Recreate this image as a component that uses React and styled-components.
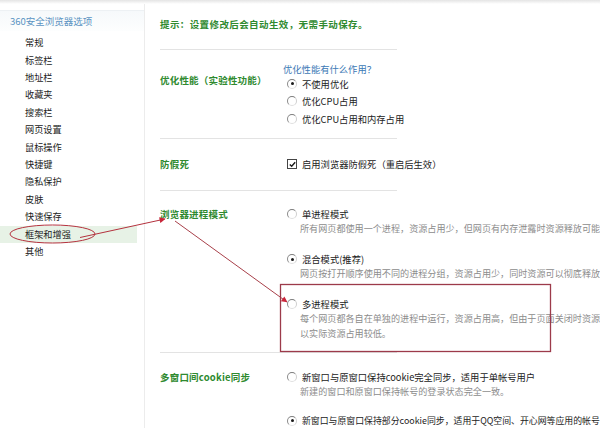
import React from 'react';
import styled, { createGlobalStyle } from 'styled-components';

const GlobalStyle = createGlobalStyle`
  html, body {
    margin: 0;
    padding: 0;
    background: #fff;
  }
  body {
    font-family: 'Noto Sans CJK SC', 'Noto Sans', sans-serif;
    color: #222;
  }
`;

const Page = styled.div`
  position: relative;
  width: 600px;
  height: 428px;
  overflow: hidden;
  background: #fff;
`;

const TopShade = styled.div`
  height: 4px;
  background: linear-gradient(#e4e4e4, #fff);
`;

const Body = styled.div`
  display: flex;
  height: 424px;
`;

const Sidebar = styled.aside`
  box-sizing: border-box;
  width: 145px;
  flex: none;
  padding-top: 6px;
  border-right: 1px solid #ececec;
`;

const SideHeader = styled.div`
  height: 20px;
  line-height: 20px;
  padding-left: 10px;
  font-size: 9.5px;
  color: #5a93c2;
  border-top: 1px solid #edf1f4;
  background: linear-gradient(#f6f9fb, #fdfefe);
`;

const Menu = styled.ul`
  list-style: none;
  margin: 3.3px 0 0;
  padding: 0;
`;

const MenuItem = styled.li`
  width: 137px;
  height: 17.4px;
  line-height: 17.4px;
  padding-left: 25px;
  box-sizing: border-box;
  font-size: 9.2px;
  color: #222;
  background: ${p => (p.$active ? '#e7f2e6' : 'transparent')};
`;

const Main = styled.main`
  flex: 1;
  padding-left: 15px;
  overflow: hidden;
  white-space: nowrap;
`;

const Tip = styled.div`
  padding-top: 11.5px;
  line-height: 17px;
  font-size: 9.5px;
  font-weight: 700;
  letter-spacing: 0.4px;
  color: #2f8a2f;
`;

const Separator = styled.div`
  width: 237px;
  height: 1px;
  background: #e3e3e3;
  margin-top: ${p => p.$top || 0}px;
`;

const Section = styled.section`
  display: grid;
  grid-template-columns: 123px 1fr;
  align-items: start;
  padding: ${p => p.$pt}px 0 ${p => p.$pb}px;
`;

const Label = styled.div`
  margin-top: ${p => p.$offset || 0}px;
  line-height: ${p => p.$lh || 17}px;
  font-size: 9.5px;
  font-weight: 700;
  letter-spacing: 0.2px;
  color: #2f8a2f;
`;

const Controls = styled.div`
  display: flex;
  flex-direction: column;
  gap: ${p => p.$gap || 0}px;
`;

const HelpLink = styled.a`
  line-height: 12px;
  font-size: 9.3px;
  color: #3b78b5;
  text-decoration: none;
`;

const Choice = styled.div`
  display: flex;
  align-items: center;
  gap: 5px;
  padding-left: 4px;
  height: ${p => p.$h || 17.5}px;
  font-size: ${p => p.$size || 9.3}px;
  color: #222;
`;

const Radio = styled.span`
  position: relative;
  width: 8px;
  height: 8px;
  flex: none;
  border-radius: 50%;
  border: 1px solid;
  border-color: #7d7d7d #cfcfcf #e0e0e0 #8a8a8a;
  background: #fff;

  &::after {
    content: '';
    display: ${p => (p.$checked ? 'block' : 'none')};
    position: absolute;
    left: 2.5px;
    top: 2.5px;
    width: 3px;
    height: 3px;
    border-radius: 50%;
    background: #1a1a1a;
  }
`;

const Box = styled.span`
  width: 8px;
  height: 8px;
  flex: none;
  border: 1px solid #444;
  background: #fff;
  display: flex;
  align-items: center;
  justify-content: center;
`;

const Desc = styled.div`
  padding-left: 17px;
  line-height: 14.5px;
  font-size: 9.1px;
  color: #8c8c8c;
`;

const Option = styled.div``;

const Overlay = styled.svg`
  position: absolute;
  left: 0;
  top: 0;
  pointer-events: none;
`;

const menu = [
  '常规', '标签栏', '地址栏', '收藏夹', '搜索栏', '网页设置', '鼠标操作',
  '快捷键', '隐私保护', '皮肤', '快速保存', '框架和增强', '其他',
];

const RadioOption = ({ checked, title, lines, size, h = 14.5 }) => (
  <Option>
    <Choice $h={h} $size={size}>
      <Radio $checked={checked} />
      {title}
    </Choice>
    {lines.map(l => (
      <Desc key={l}>{l}</Desc>
    ))}
  </Option>
);

export default function App() {
  return (
    <Page>
      <GlobalStyle />
      <TopShade />
      <Body>
        <Sidebar>
          <SideHeader>360安全浏览器选项</SideHeader>
          <Menu>
            {menu.map(m => (
              <MenuItem key={m} $active={m === '框架和增强'}>
                {m}
              </MenuItem>
            ))}
          </Menu>
        </Sidebar>

        <Main>
          <Tip>提示：设置修改后会自动生效，无需手动保存。</Tip>
          <Separator $top={16.5} />

          <Section $pt={13} $pb={10.5}>
            <Label $offset={8.5}>优化性能（实验性功能）</Label>
            <Controls>
              <HelpLink href="#">优化性能有什么作用？</HelpLink>
              <Choice>
                <Radio $checked />
                不使用优化
              </Choice>
              <Choice>
                <Radio />
                优化CPU占用
              </Choice>
              <Choice>
                <Radio />
                优化CPU占用和内存占用
              </Choice>
            </Controls>
          </Section>
          <Separator />

          <Section $pt={16.5} $pb={17.5}>
            <Label>防假死</Label>
            <Controls>
              <Choice $h={17}>
                <Box>
                  <svg width="7" height="7" viewBox="0 0 7 7">
                    <path d="M0.8 3.4 L2.7 5.3 L6.2 1.2" fill="none" stroke="#1a1a1a" strokeWidth="1.4" />
                  </svg>
                </Box>
                启用浏览器防假死（重启后生效）
              </Choice>
            </Controls>
          </Section>
          <Separator />

          <Section $pt={15.75} $pb={11.75}>
            <Label $lh={14.5}>浏览器进程模式</Label>
            <Controls $gap={16}>
              <RadioOption
                title="单进程模式"
                lines={['所有网页都使用一个进程，资源占用少，但网页有内存泄露时资源释放可能']}
              />
              <RadioOption
                checked
                title="混合模式(推荐)"
                lines={['网页按打开顺序使用不同的进程分组，资源占用少，同时资源可以彻底释放']}
              />
              <RadioOption
                title="多进程模式"
                lines={[
                  '每个网页都各自在单独的进程中运行，资源占用高，但由于页面关闭时资源',
                  '以实际资源占用较低。',
                ]}
              />
            </Controls>
          </Section>
          <Separator />

          <Section $pt={16.75} $pb={0}>
            <Label $lh={14.5}>多窗口间cookie同步</Label>
            <Controls $gap={16}>
              <RadioOption
                title="新窗口与原窗口保持cookie完全同步，适用于单帐号用户"
                lines={['新建的窗口和原窗口保持帐号的登录状态完全一致。']}
              />
              <RadioOption
                checked
                size={8.9}
                h={12}
                title="新窗口与原窗口保持部分cookie同步，适用于QQ空间、开心网等应用的帐号"
                lines={[]}
              />
            </Controls>
          </Section>
        </Main>
      </Body>

      <Overlay width="600" height="428" viewBox="0 0 600 428">
        <defs>
          <marker id="head" viewBox="0 0 10 10" refX="9" refY="5" markerWidth="8" markerHeight="6" orient="auto" markerUnits="userSpaceOnUse">
            <path d="M0 0 L10 5 L0 10 Z" fill="#c8263a" />
          </marker>
        </defs>
        <ellipse cx="52.5" cy="234" rx="42.5" ry="9" fill="none" stroke="#b4323e" strokeWidth="1" />
        <line x1="80" y1="237.5" x2="165" y2="219" stroke="#b4323e" strokeWidth="1" markerEnd="url(#head)" />
        <line x1="175" y1="221" x2="287" y2="302" stroke="#a8404a" strokeWidth="1" markerEnd="url(#head)" />
        <rect x="280.5" y="284.5" width="270" height="67" fill="none" stroke="#9c3a4a" strokeWidth="1.3" />
      </Overlay>
    </Page>
  );
}
